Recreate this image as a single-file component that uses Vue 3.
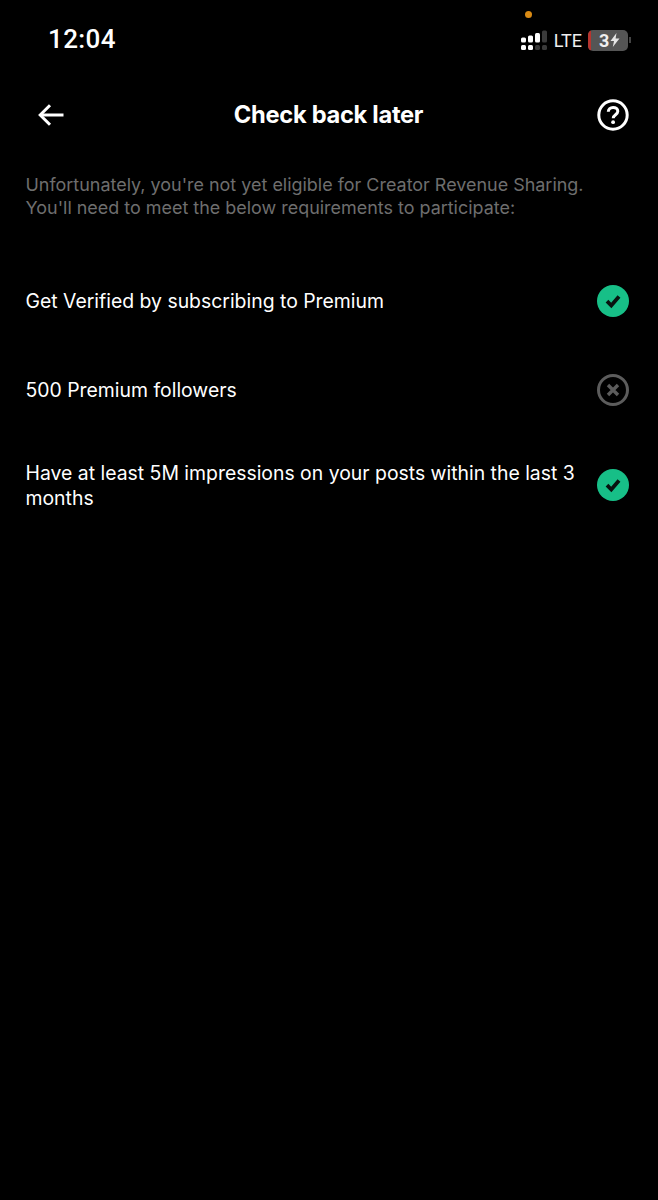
<template>
  <div class="screen">
    <div class="status-bar">
      <span class="clock">12:04</span>
      <span class="dot"></span>
      <div class="status-right">
        <svg class="signal" width="28" height="21" viewBox="0 0 28 21">
          <g fill="#fff">
            <rect x="1" y="7.5" width="5" height="5" rx="1.5" />
            <rect x="1" y="15" width="5" height="5" rx="1.5" />
            <rect x="8" y="5.5" width="5" height="7" rx="1.5" />
            <rect x="8" y="15" width="5" height="5" rx="1.5" />
            <rect x="15" y="3" width="5" height="9.5" rx="1.5" />
          </g>
          <g fill="#3a3a3a">
            <rect x="15" y="15" width="5" height="5" rx="1.5" />
            <rect x="22" y="0.5" width="5" height="12" rx="1.5" />
            <rect x="22" y="15" width="5" height="5" rx="1.5" />
          </g>
        </svg>
        <span class="lte">LTE</span>
        <div class="battery">
          <span class="level"></span>
          <span class="pct">3</span>
          <svg width="10" height="14" viewBox="0 0 10 14"><path d="M6.5 0 0.5 8H4L2.8 14 9.5 5.6H5.6Z" fill="#e6e6e6" /></svg>
        </div>
        <span class="nub"></span>
      </div>
    </div>

    <header class="top-bar">
      <button class="icon-btn">
        <svg width="30" height="30" viewBox="0 0 30 30" fill="none" stroke="#fff" stroke-width="3">
          <path d="M27.5 15H4.5" />
          <path d="M14 5.2 4.2 15 14 24.8" />
        </svg>
      </button>
      <h1>Check back later</h1>
      <button class="icon-btn">
        <svg width="32" height="32" viewBox="0 0 32 32" fill="none" stroke="#fff">
          <circle cx="16" cy="16" r="14.2" stroke-width="3" />
          <path d="M11.3 12.8c0-2.7 2.1-4.4 4.8-4.4s4.7 1.6 4.7 3.9c0 3.4-4.6 3.4-4.6 7" stroke-width="3" />
          <circle cx="16.1" cy="23.2" r="1.9" fill="#fff" stroke="none" />
        </svg>
      </button>
    </header>

    <p class="intro">
      Unfortunately, you're not yet eligible for Creator Revenue Sharing.<br />
      You'll need to meet the below requirements to participate:
    </p>

    <ul class="reqs">
      <li v-for="req in requirements" :key="req.text" class="req">
        <span class="req-text">{{ req.text }}</span>
        <svg v-if="req.met" width="32" height="32" viewBox="0 0 32 32">
          <circle cx="16" cy="16" r="16" fill="#17bf87" />
          <path d="M10 16.2 14.3 20.5 22 11.6" fill="none" stroke="#08130f" stroke-width="3.8" />
        </svg>
        <svg v-else width="32" height="32" viewBox="0 0 32 32" fill="none" stroke="#5c5c5c">
          <circle cx="16" cy="16" r="14.5" stroke-width="3" />
          <path d="M11 11 21 21M21 11 11 21" stroke-width="3.4" />
        </svg>
      </li>
    </ul>
  </div>
</template>

<script setup>
const requirements = [
  { text: 'Get Verified by subscribing to Premium', met: true },
  { text: '500 Premium followers', met: false },
  { text: 'Have at least 5M impressions on your posts within the last 3 months', met: true }
]
</script>

<style>
html, body {
  background: #000;
}
</style>

<style scoped>
.screen {
  width: 658px;
  height: 1200px;
  background: #000;
  color: #fff;
  font-family: Inter, Roboto, "Liberation Sans", sans-serif;
  overflow: hidden;
  position: relative;
}

.status-bar {
  height: 78px;
  display: flex;
  align-items: center;
  justify-content: space-between;
  padding: 0 27px 0 48px;
}

.clock {
  font-family: Roboto, sans-serif;
  font-size: 26px;
  font-weight: 500;
  letter-spacing: 0.4px;
}

.dot {
  position: absolute;
  left: 525px;
  top: 11px;
  width: 7px;
  height: 7px;
  border-radius: 50%;
  background: #d98a14;
}

.status-right {
  display: flex;
  align-items: center;
  margin-top: 2px;
}

.lte {
  font-family: Roboto, sans-serif;
  font-size: 18px;
  margin: 0 6px 0 6px;
  color: #eee;
}

.battery {
  width: 40px;
  height: 21px;
  border-radius: 5px;
  background: #555;
  display: flex;
  align-items: center;
  gap: 1px;
  overflow: hidden;
}

.level {
  width: 3px;
  height: 21px;
  background: #b8352f;
  margin-right: 7px;
}

.pct {
  font-family: Roboto, sans-serif;
  font-size: 18px;
  font-weight: 700;
  color: #eee;
}

.nub {
  width: 2px;
  height: 6px;
  margin-left: 1px;
  background: #444;
}

.top-bar {
  height: 74px;
  display: flex;
  align-items: center;
  justify-content: space-between;
  padding: 0 29px 0 36px;
}

.top-bar h1 {
  margin: 0 6px 2px 0;
  font-size: 23.7px;
  font-weight: 700;
  letter-spacing: -0.3px;
}

.icon-btn {
  background: none;
  border: 0;
  padding: 0;
  display: flex;
}

.intro {
  margin: 21px 25.5px 0;
  font-size: 17.95px;
  line-height: 23px;
  color: #6e6e6e;
}

.reqs {
  list-style: none;
  margin: 37px 0 0;
  padding: 0 29px 0 25.5px;
}

.req {
  display: flex;
  align-items: center;
  justify-content: space-between;
  min-height: 89px;
  padding: 25px 0;
  box-sizing: border-box;
}

.req-text {
  width: 560px;
  padding-top: 2px;
  font-size: 19.4px;
  line-height: 25px;
}
</style>
